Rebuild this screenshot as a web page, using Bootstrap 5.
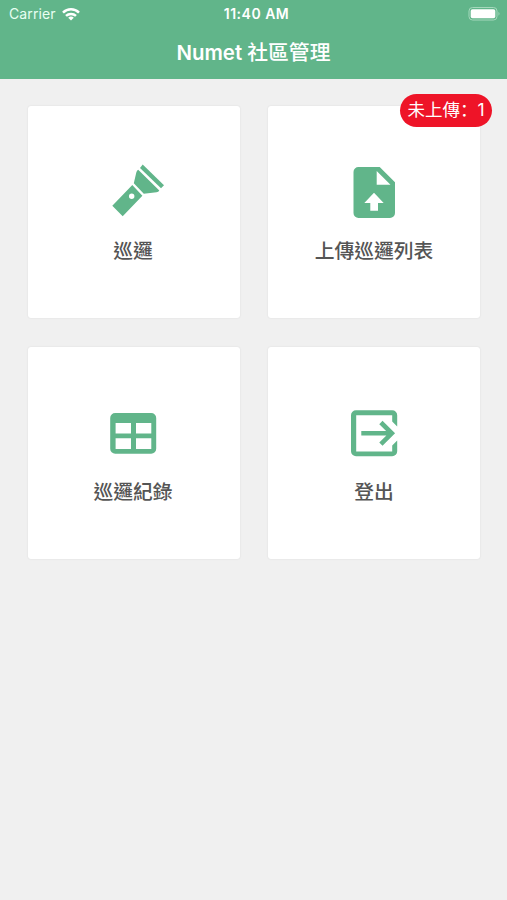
<!DOCTYPE html>
<html lang="zh-Hant">
<head>
<meta charset="utf-8">
<meta name="viewport" content="width=device-width, initial-scale=1">
<title>Numet 社區管理</title>
<link href="https://cdn.jsdelivr.net/npm/bootstrap@5.3.0/dist/css/bootstrap.min.css" rel="stylesheet">
<style>
  body { background: #f0f0f0; font-family: Inter, "Noto Sans CJK TC", sans-serif; min-height: 900px; }
  .app-header { background: #61b58a; height: 79px; color: #fff; }
  .status-bar { height: 28px; padding: 0 6px 0 9px; font-size: 14px; line-height: 28px; }
  .carrier { color: #e8fff2; font-size: 14px; letter-spacing: .1px; }
  .clock { font-weight: 600; font-size: 14px; letter-spacing: .5px; padding-left: 3px; }
  .app-title { font-size: 20.4px; line-height: 28px; font-weight: 600; margin: 9px 0 0; }
  .app-title span { font-weight: 500; font-family: "Noto Sans CJK TC", sans-serif; font-size: 20.8px; }
  .tiles { padding: 27px 27px 0 28px; display: grid; grid-template-columns: 212px 212px; gap: 29px 28px; }
  .tile { height: 212px; border: 0; border-radius: 3px; box-shadow: 0 0 2px rgba(0,0,0,.1); padding-top: 54px; }
  .tile svg { width: 60px; height: 60px; fill: #61b58a; overflow: visible; }
  .tile-label { font-family: "Noto Sans CJK TC", sans-serif; font-size: 19.8px; font-weight: 500; line-height: 30px; color: #555; margin-top: 15px; }
  .tile:nth-child(odd) .tile-label { padding-right: 2px; }
  .pending { top: -12px; right: -12px; width: 92px; height: 33px; background: #ee1428; color: #fff; font-size: 17.5px; line-height: 32px; font-family: Inter, "Noto Sans CJK TC", sans-serif; }
  .pending span { font-family: "Noto Sans CJK SC", sans-serif; line-height: 1; }
</style>
</head>
<body>
<header class="app-header">
  <div class="status-bar row g-0 align-items-center">
    <div class="col d-flex align-items-center">
      <span class="carrier">Carrier</span>
      <svg class="ms-1" width="22" height="13" viewBox="-2 0 22 13" fill="none" stroke="#fff" stroke-width="2.5">
        <path d="M1 4.6a11.5 11.5 0 0 1 16 0M4 7.9a7.2 7.2 0 0 1 10 0"/>
        <path d="M9 12.6 6.2 9.8a4 4 0 0 1 5.6 0z" fill="#fff" stroke="none"/>
      </svg>
    </div>
    <div class="col-auto clock">11:40 AM</div>
    <div class="col d-flex justify-content-end">
      <svg width="33" height="15" viewBox="0 0 33 15">
        <rect x="1" y=".5" width="28" height="12.5" rx="3.5" fill="none" stroke="#a5d8bc" stroke-width="1"/>
        <rect x="2.7" y="2.2" width="24.6" height="9.1" rx="1.8" fill="#fff"/>
        <path d="M30.5 4.7q2 2 0 4z" fill="#a5d8bc"/>
      </svg>
    </div>
  </div>
  <h1 class="app-title text-center">Numet <span>社區管理</span></h1>
</header>

<main class="tiles">
  <div class="card tile align-items-center">
    <svg viewBox="104 160 60 60">
      <path d="M140 168 142.7 164.6 164 185.2 161 188.3z"/>
      <path d="M138.2 169.8 159.3 190.4Q158.5 192 156.5 192.2L143.8 193.7 133.8 183.2 136.3 172.5Q136.8 170.6 138.2 169.8z"/>
      <path fill-rule="evenodd" d="M132.3 185 142.4 195.7 122.7 216.3 112.3 205.7zM131.7 193.6a2.7 2.7 0 1 0 .01 5.4 2.7 2.7 0 1 0-.01-5.4z"/>
    </svg>
    <div class="tile-label">巡邏</div>
  </div>
  <div class="card tile align-items-center">
    <svg viewBox="344 160 60 60">
      <path fill-rule="evenodd" d="M358.5 167H379.7L395 182.2V213a5 5 0 0 1-5 5H358.5a5 5 0 0 1-5-5V172a5 5 0 0 1 5-5zM376.7 171V184.7H390.5zM374 192.7 364.3 203H370.3V210.7H378V203H383.7z"/>
    </svg>
    <div class="tile-label">上傳巡邏列表</div>
    <span class="pending position-absolute rounded-pill text-center text-nowrap">未上傳<span lang="zh-Hans">：</span>1</span>
  </div>
  <div class="card tile align-items-center">
    <svg viewBox="104 401 60 60">
      <path fill-rule="evenodd" d="M115.2 413H151.2a5 5 0 0 1 5 5V448.7a5 5 0 0 1-5 5H115.2a5 5 0 0 1-5-5V418a5 5 0 0 1 5-5zM115.6 423V433.6H131V423zM136 423V433.6H151.3V423zM115.6 438.3V449H131V438.3zM136 438.3V449H151.3V438.3z"/>
    </svg>
    <div class="tile-label">巡邏紀錄</div>
  </div>
  <div class="card tile align-items-center">
    <svg viewBox="344 401 60 60">
      <path d="M356 410.3H392.2a5 5 0 0 1 5 5V426.4L392.2 421.4V415.2H356.2V451.4H392.2V445.4L397.2 440.4V451.3a5 5 0 0 1-5 5H356a5 5 0 0 1-5-5V415.3a5 5 0 0 1 5-5z"/>
      <path d="M361.3 433.3H391M380.9 422.5 391.8 433.3 380.9 444.1" fill="none" stroke="#61b58a" stroke-width="4.6"/>
    </svg>
    <div class="tile-label">登出</div>
  </div>
</main>
<script src="https://cdn.jsdelivr.net/npm/bootstrap@5.3.0/dist/js/bootstrap.bundle.min.js"></script>
</body>
</html>
